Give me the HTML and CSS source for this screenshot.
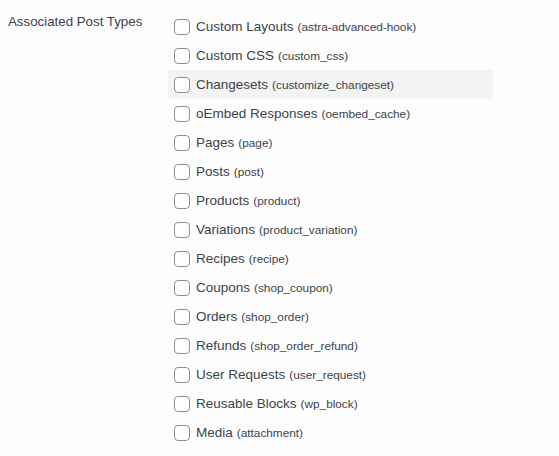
FILE: index.html
```html
<!DOCTYPE html>
<html>
<head>
<meta charset="utf-8">
<link rel="stylesheet" href="styles.css">
</head>
<body>
<div class="field">
  <div class="field-label">Associated Post Types</div>
  <ul class="options">
    <li class="option"><span class="box"></span><span class="name">Custom Layouts</span><span class="slug">(astra-advanced-hook)</span></li>
    <li class="option"><span class="box"></span><span class="name">Custom CSS</span><span class="slug">(custom_css)</span></li>
    <li class="option hover"><span class="box"></span><span class="name">Changesets</span><span class="slug">(customize_changeset)</span></li>
    <li class="option"><span class="box"></span><span class="name">oEmbed Responses</span><span class="slug">(oembed_cache)</span></li>
    <li class="option"><span class="box"></span><span class="name">Pages</span><span class="slug">(page)</span></li>
    <li class="option"><span class="box"></span><span class="name">Posts</span><span class="slug">(post)</span></li>
    <li class="option"><span class="box"></span><span class="name">Products</span><span class="slug">(product)</span></li>
    <li class="option"><span class="box"></span><span class="name">Variations</span><span class="slug">(product_variation)</span></li>
    <li class="option"><span class="box"></span><span class="name">Recipes</span><span class="slug">(recipe)</span></li>
    <li class="option"><span class="box"></span><span class="name">Coupons</span><span class="slug">(shop_coupon)</span></li>
    <li class="option"><span class="box"></span><span class="name">Orders</span><span class="slug">(shop_order)</span></li>
    <li class="option"><span class="box"></span><span class="name">Refunds</span><span class="slug">(shop_order_refund)</span></li>
    <li class="option"><span class="box"></span><span class="name">User Requests</span><span class="slug">(user_request)</span></li>
    <li class="option"><span class="box"></span><span class="name">Reusable Blocks</span><span class="slug">(wp_block)</span></li>
    <li class="option"><span class="box"></span><span class="name">Media</span><span class="slug">(attachment)</span></li>
  </ul>
</div>
</body>
</html>
```
FILE: styles.css
```css
html, body {
  margin: 0;
  padding: 0;
  background: #fdfdfd;
}
body {
  font-family: "Liberation Sans", Arial, sans-serif;
  color: #3c434a;
  font-size: 13px;
}
.field {
  display: flex;
  padding: 12px 0 0 8px;
}
.field-label {
  width: 160px;
  flex: none;
  font-size: 13.3px;
  line-height: 18px;
  padding-top: 1px;
}
.options {
  list-style: none;
  margin: 0;
  padding: 0;
  width: 325px;
}
.option {
  display: flex;
  align-items: center;
  height: 29px;
  padding-left: 6px;
}
.option.hover {
  background: #f3f3f3;
}
.box {
  width: 16px;
  height: 16px;
  box-sizing: border-box;
  border: 1px solid #8c8f94;
  border-radius: 4px;
  background: #fff;
  flex: none;
  margin-right: 6px;
}
.name {
  font-size: 13.5px;
  margin-right: 4px;
}
.slug {
  font-size: 11.8px;
}
```
